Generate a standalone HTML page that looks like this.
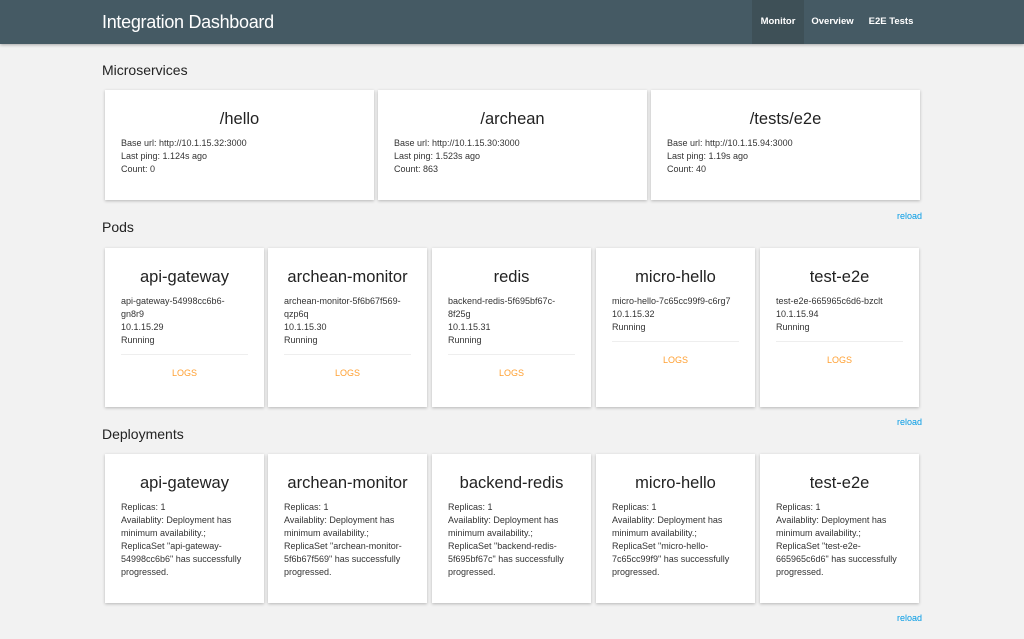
<!DOCTYPE html>
<html><head><style>
*{box-sizing:border-box;margin:0;padding:0}
body{width:1024px;height:639px;background:#f2f2f2;font-family:"Liberation Sans",sans-serif;color:#222;overflow:hidden;position:relative}
.hdr{position:absolute;left:0;top:0;width:1024px;height:44px;background:#455a64;box-shadow:0 1px 3px rgba(0,0,0,.3)}
.hdr .t{position:absolute;left:102px;top:12px;color:#fff;font-size:18px;letter-spacing:-0.3px}
.nav{position:absolute;top:0;height:44px;color:#fff;font-size:9.5px;font-weight:bold;line-height:44px;text-align:center}
h2{position:absolute;left:102px;font-size:14px;font-weight:normal;color:#222}
.card{position:absolute;background:#fff;box-shadow:0 1px 3px rgba(0,0,0,.25);padding:0 16px}
.card .ti{text-align:center;font-size:16.5px;color:#222;margin-top:20px;height:27px}
.card .b{font-size:9px;line-height:13px;color:#333}
.div{position:absolute;height:1px;background:#eee}
.logs{position:absolute;width:100%;left:0;text-align:center;color:#ffa032;font-size:9px}
.reload{position:absolute;right:102px;color:#039be5;font-size:9px}
</style></head><body>
<div class="hdr"><div class="t">Integration Dashboard</div>
<div class="nav" style="left:752px;width:52px;background:#3e5057">Monitor</div>
<div class="nav" style="left:804px;width:57px">Overview</div>
<div class="nav" style="left:861px;width:60px">E2E Tests</div></div>

<h2 style="top:62px">Microservices</h2>
<div class="card" style="left:105px;top:90px;width:269px;height:110px"><div class="ti">/hello</div><div class="b">Base url: http://10.1.15.32:3000<br>Last ping: 1.124s ago<br>Count: 0</div></div>
<div class="card" style="left:378px;top:90px;width:269px;height:110px"><div class="ti">/archean</div><div class="b">Base url: http://10.1.15.30:3000<br>Last ping: 1.523s ago<br>Count: 863</div></div>
<div class="card" style="left:651px;top:90px;width:269px;height:110px"><div class="ti">/tests/e2e</div><div class="b">Base url: http://10.1.15.94:3000<br>Last ping: 1.19s ago<br>Count: 40</div></div>
<div class="reload" style="top:211px">reload</div>

<h2 style="top:219px">Pods</h2>
<div class="card" style="left:105px;top:248px;width:159px;height:159px"><div class="ti">api-gateway</div><div class="b">api-gateway-54998cc6b6-<br>gn8r9<br>10.1.15.29<br>Running</div><div class="div" style="left:16px;right:16px;top:106px"></div><div class="logs" style="top:120px">LOGS</div></div>
<div class="card" style="left:268px;top:248px;width:159px;height:159px"><div class="ti">archean-monitor</div><div class="b">archean-monitor-5f6b67f569-<br>qzp6q<br>10.1.15.30<br>Running</div><div class="div" style="left:16px;right:16px;top:106px"></div><div class="logs" style="top:120px">LOGS</div></div>
<div class="card" style="left:432px;top:248px;width:159px;height:159px"><div class="ti">redis</div><div class="b">backend-redis-5f695bf67c-<br>8f25g<br>10.1.15.31<br>Running</div><div class="div" style="left:16px;right:16px;top:106px"></div><div class="logs" style="top:120px">LOGS</div></div>
<div class="card" style="left:596px;top:248px;width:159px;height:159px"><div class="ti">micro-hello</div><div class="b">micro-hello-7c65cc99f9-c6rg7<br>10.1.15.32<br>Running</div><div class="div" style="left:16px;right:16px;top:93px"></div><div class="logs" style="top:107px">LOGS</div></div>
<div class="card" style="left:760px;top:248px;width:159px;height:159px"><div class="ti">test-e2e</div><div class="b">test-e2e-665965c6d6-bzclt<br>10.1.15.94<br>Running</div><div class="div" style="left:16px;right:16px;top:93px"></div><div class="logs" style="top:107px">LOGS</div></div>
<div class="reload" style="top:417px">reload</div>

<h2 style="top:426px">Deployments</h2>
<div class="card" style="left:105px;top:454px;width:159px;height:149px"><div class="ti">api-gateway</div><div class="b">Replicas: 1<br>Availablity: Deployment has minimum availability.;<br>ReplicaSet "api-gateway-54998cc6b6" has successfully progressed.</div></div>
<div class="card" style="left:268px;top:454px;width:159px;height:149px"><div class="ti">archean-monitor</div><div class="b">Replicas: 1<br>Availablity: Deployment has minimum availability.;<br>ReplicaSet "archean-monitor-5f6b67f569" has successfully progressed.</div></div>
<div class="card" style="left:432px;top:454px;width:159px;height:149px"><div class="ti">backend-redis</div><div class="b">Replicas: 1<br>Availablity: Deployment has minimum availability.;<br>ReplicaSet "backend-redis-5f695bf67c" has successfully progressed.</div></div>
<div class="card" style="left:596px;top:454px;width:159px;height:149px"><div class="ti">micro-hello</div><div class="b">Replicas: 1<br>Availablity: Deployment has minimum availability.;<br>ReplicaSet "micro-hello-7c65cc99f9" has successfully progressed.</div></div>
<div class="card" style="left:760px;top:454px;width:159px;height:149px"><div class="ti">test-e2e</div><div class="b">Replicas: 1<br>Availablity: Deployment has minimum availability.;<br>ReplicaSet "test-e2e-665965c6d6" has successfully progressed.</div></div>
<div class="reload" style="top:613px">reload</div>
</body></html>
